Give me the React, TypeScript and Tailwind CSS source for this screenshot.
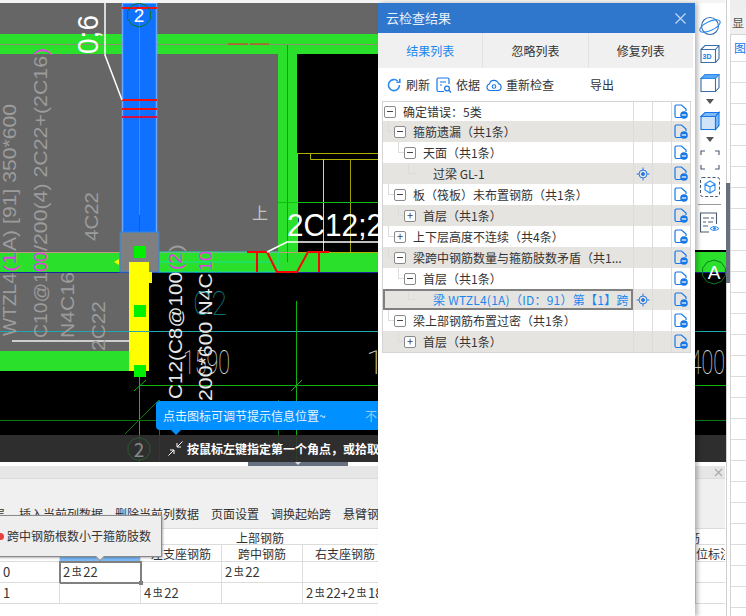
import React from 'react';

const GREEN = '#2be02b';
const MAGENTA = '#e040e0';

interface TreeRow {
  level: number;
  box?: '-' | '+';
  text: string;
  locate?: boolean;
  selected?: boolean;
}

const treeRows: TreeRow[] = [
  { level: 0, box: '-', text: '确定错误：5类' },
  { level: 1, box: '-', text: '箍筋遗漏（共1条）' },
  { level: 2, box: '-', text: '天面（共1条）' },
  { level: 3, text: '过梁 GL-1', locate: true },
  { level: 1, box: '-', text: '板（筏板）未布置钢筋（共1条）' },
  { level: 2, box: '+', text: '首层（共1条）' },
  { level: 1, box: '+', text: '上下层高度不连续（共4条）' },
  { level: 1, box: '-', text: '梁跨中钢筋数量与箍筋肢数矛盾（共1...' },
  { level: 2, box: '-', text: '首层（共1条）' },
  { level: 3, text: '梁 WTZL4(1A)（ID：91）第【1】跨', locate: true, selected: true },
  { level: 1, box: '-', text: '梁上部钢筋布置过密（共1条）' },
  { level: 2, box: '+', text: '首层（共1条）' },
];

function RotText({ x, y, len, size, fill, children }: { x: number; y: number; len: number; size: number; fill: string; children: string }) {
  return (
    <text
      transform={`translate(${x} ${y}) rotate(-90)`}
      fontSize={size}
      fill={fill}
      textLength={len}
      lengthAdjust="spacingAndGlyphs"
      fontFamily="'Liberation Sans', sans-serif"
    >
      {children}
    </text>
  );
}

function Octagon({ cx, cy, r, stroke }: { cx: number; cy: number; r: number; stroke: string }) {
  const pts = [];
  for (let i = 0; i < 10; i++) {
    const a = (Math.PI * 2 * i) / 10 + Math.PI / 10;
    pts.push(`${cx + r * Math.cos(a)},${cy + r * Math.sin(a)}`);
  }
  return <polygon points={pts.join(' ')} fill="none" stroke={stroke} strokeWidth="1" />;
}

function CadDrawing() {
  const grey = '#9c9c9c';
  const thin = "Roboto, 'Liberation Sans', sans-serif";
  return (
    <svg viewBox="0 3 726 459" width="726" height="459" className="block">
      <rect x="0" y="3" width="726" height="459" fill="#000" />
      {/* grey slabs */}
      <rect x="0" y="3" width="378" height="31" fill="#666" />
      <rect x="0" y="54" width="278" height="198" fill="#666" />
      <rect x="0" y="272" width="129" height="79" fill="#666" />
      {/* green beams */}
      <rect x="0" y="34" width="378" height="20" fill={GREEN} />
      <rect x="278" y="54" width="19" height="198" fill={GREEN} />
      <rect x="0" y="252" width="378" height="20" fill={GREEN} />
      <rect x="695" y="252" width="31" height="20" fill={GREEN} />
      <rect x="0" y="351" width="129" height="20" fill={GREEN} />
      <line x1="287.5" y1="44" x2="287.5" y2="262" stroke="#6a6a30" />
      <line x1="0" y1="44.5" x2="378" y2="44.5" stroke="#8d8d70" />
      <line x1="228" y1="44" x2="248" y2="44" stroke="#e03010" />
      <line x1="250" y1="44" x2="269" y2="44" stroke="#e03010" />
      <line x1="0" y1="252.5" x2="378" y2="252.5" stroke="#c09a80" />
      <line x1="0" y1="272.5" x2="378" y2="272.5" stroke="#1428a0" />
      <line x1="695" y1="272.5" x2="726" y2="272.5" stroke="#1428a0" />

      {/* blue column */}
      <rect x="122" y="3" width="35" height="232" fill="#1070ff" />
      <rect x="122.5" y="3" width="34" height="232" fill="none" stroke="#6aa8ff" strokeWidth="1.5" />
      <line x1="139.5" y1="3" x2="139.5" y2="232" stroke="#8a7f7f" />
      <line x1="122" y1="8" x2="157" y2="8" stroke="#f01010" strokeWidth="2" />
      <line x1="122" y1="100" x2="157" y2="100" stroke="#f01010" strokeWidth="2" />
      <line x1="122" y1="109" x2="157" y2="109" stroke="#f01010" strokeWidth="2" />
      <line x1="122" y1="117" x2="157" y2="117" stroke="#d81040" strokeWidth="2" />
      <line x1="139.5" y1="215" x2="139.5" y2="232" stroke="#f01010" />
      <Octagon cx={139} cy={15} r={12} stroke="#0a7a20" />
      <text x="139" y="22" textAnchor="middle" fontSize="19" fill="#fff" fontFamily="'Liberation Sans', sans-serif">2</text>

      {/* leader */}
      <polyline points="105,3 105,55 122,100" fill="none" stroke="#fff" strokeWidth="1.5" />

      {/* joint + yellow stub */}
      <rect x="159" y="252" width="119" height="20" fill="none" stroke="#10e0a0" />
      <line x1="159" y1="262" x2="278" y2="262" stroke="#10e0a0" />
      <rect x="120" y="232" width="39" height="40" fill="#7f7f7f" stroke="#2f86e6" />
      <rect x="134" y="246" width="12" height="12" fill="#00f000" />
      <polygon points="114,262 119,259 119,265" fill="#f8f800" />
      <rect x="149" y="272" width="3" height="11" fill="#f8f800" />
      <rect x="129" y="262" width="20" height="109" fill="#ffff00" />
      <rect x="134" y="305" width="12" height="12" fill="#00f000" />
      <rect x="134" y="365" width="12" height="12" fill="#00f000" />

      {/* stairs */}
      <rect x="297.5" y="153.5" width="82" height="99" fill="none" stroke="#b0b000" />
      <polyline points="310.5,153 310.5,159.5 378,159.5" fill="none" stroke="#b0b000" />
      <line x1="323.5" y1="159" x2="323.5" y2="252" stroke="#e6e600" />
      <line x1="350.5" y1="159" x2="350.5" y2="252" stroke="#a0a000" />
      <line x1="278" y1="202.5" x2="378" y2="202.5" stroke="#10c010" />

      {/* red break symbol */}
      <polyline points="247,252 267,252 277,272 297,272 308,252 329,252" fill="none" stroke="#f00" strokeWidth="2" />
      <line x1="257" y1="252" x2="257" y2="272" stroke="#f00" strokeWidth="2" />
      <line x1="319" y1="252" x2="319" y2="272" stroke="#f00" strokeWidth="2" />

      {/* grid lines */}
      <line x1="0" y1="331.5" x2="726" y2="331.5" stroke="#20a8b0" />
      <line x1="12" y1="341" x2="129" y2="341" stroke="#f0f0f0" strokeWidth="1.5" />
      <line x1="139.5" y1="377" x2="139.5" y2="462" stroke="#10c010" />
      <line x1="139" y1="385.5" x2="726" y2="385.5" stroke="#10b010" />
      <line x1="0" y1="420.5" x2="726" y2="420.5" stroke="#0a7a10" />
      <line x1="296.5" y1="301" x2="296.5" y2="462" stroke="#10b010" />
      <line x1="159.5" y1="400" x2="159.5" y2="462" stroke="#0a7a10" />
      <line x1="278.5" y1="400" x2="278.5" y2="462" stroke="#0a7a10" />
      <line x1="134" y1="391" x2="146" y2="380" stroke="#10b010" />
      <line x1="291" y1="391" x2="302" y2="380" stroke="#10b010" />
      <line x1="125" y1="434" x2="159" y2="400" stroke="#0a7a10" />

      {/* rotated annotation text: split where the colour changes on the green band */}
      <RotText x={98} y={54} len={39} size={30} fill="#fff">0;6</RotText>

      <RotText x={16} y={336} len={63} size={19} fill={grey}>WTZL4</RotText>
      <RotText x={16} y={272} len={20} size={19} fill={MAGENTA}>(1</RotText>
      <RotText x={16} y={251} len={147} size={19} fill={grey}>A) [91] 350*600</RotText>

      <RotText x={47} y={338} len={66} size={19} fill={grey}>C10@1</RotText>
      <RotText x={47} y={272} len={20} size={19} fill={MAGENTA}>00</RotText>
      <RotText x={47} y={251} len={195} size={19} fill={grey}>/200(4) 2C22+(2C16</RotText>
      <RotText x={47} y={55} len={7} size={19} fill={MAGENTA}>)</RotText>

      <RotText x={74} y={338} len={66} size={19} fill={grey}>N4C16</RotText>
      <RotText x={98} y={241} len={49} size={19} fill={grey}>4C22</RotText>
      <RotText x={105} y={351} len={50} size={19} fill={grey}>2C22</RotText>

      <RotText x={182} y={399} len={127} size={19} fill="#e8e8e8">C12(C8@100</RotText>
      <RotText x={182} y={270} len={17} size={19} fill={MAGENTA}>(2</RotText>
      <RotText x={182} y={252} len={8} size={19} fill={grey}>)</RotText>

      <RotText x={212} y={401} len={128} size={19} fill="#e8e8e8">200*600 N4C</RotText>
      <RotText x={212} y={271} len={20} size={19} fill={MAGENTA}>10</RotText>

      <text x="193" y="315" fontSize="34" fontWeight="100" fill="#10808a" fontFamily={thin} textLength="34" lengthAdjust="spacingAndGlyphs">C2</text>
      <text x="183" y="374" fontSize="33" fontWeight="100" fill="#e0e0e0" textLength="47" lengthAdjust="spacingAndGlyphs" fontFamily={thin}>1590</text>
      <text x="366" y="374" fontSize="33" fontWeight="100" fill="#e0e0e0" fontFamily={thin}>1</text>
      <text x="678" y="374" fontSize="33" fontWeight="100" fill="#e0e0e0" textLength="47" lengthAdjust="spacingAndGlyphs" fontFamily={thin}>2400</text>
      <text x="252" y="219" fontSize="16" fill="#c4c4c4" fontFamily="'Noto Sans CJK SC', sans-serif">上</text>
      <text x="287" y="236" fontSize="31" fill="#fff" textLength="96" lengthAdjust="spacingAndGlyphs" fontFamily="'Liberation Sans', sans-serif">2C12;2</text>
      <polyline points="267,252 287,242 378,242" fill="none" stroke="#fff" strokeWidth="1.5" />

      <Octagon cx={714} cy={272} r={12} stroke="#0a7a20" />
      <text x="714" y="279" textAnchor="middle" fontSize="19" fill="#fff" fontFamily="'Liberation Sans', sans-serif">A</text>
    </svg>
  );
}

function RowDocIcon() {
  return (
    <svg width="14" height="15" viewBox="0 0 14 15" fill="none">
      <path d="M9 13.5H2.5a1.5 1.5 0 0 1-1.5-1.5V2.5A1.5 1.5 0 0 1 2.5 1h5l4.5 4v2" stroke="#1677e6" strokeWidth="1.2" />
      <circle cx="10" cy="11" r="3.8" fill="#1677e6" />
      <rect x="7.8" y="10.4" width="4.4" height="1.2" fill="#fff" />
    </svg>
  );
}

function LocateIcon() {
  return (
    <svg width="14" height="14" viewBox="0 0 14 14" fill="none" stroke="#2a7be0" strokeWidth="1">
      <circle cx="7" cy="7" r="4" />
      <circle cx="7" cy="7" r="1.5" fill="#2a7be0" />
      <path d="M7 0.5v2.5M7 11v2.5M0.5 7h2.5M11 7h2.5" />
    </svg>
  );
}

function Tree() {
  return (
    <div className="mx-1 border border-[#d4d4d4]">
      {treeRows.map((row, i) => {
        const odd = i % 2 === 1;
        return (
          <div key={i} className={`relative flex ${i === 0 ? 'h-[19px]' : 'h-[21px]'} ${odd ? 'bg-[#e6e4e1]' : 'bg-white'}`}>
            {row.level > 0 && <div className="absolute top-0 h-[11px] w-[8px] border-b border-l border-[#dcdcdc]" style={{ left: 5 + (row.level - 1) * 10 }} />}
            <div
              className={`flex min-w-0 flex-1 items-center overflow-hidden whitespace-nowrap ${row.selected ? 'relative border-2 border-[#808080]' : ''}`}
              style={{ paddingLeft: row.selected ? 48 : 1 + row.level * 10 }}
            >
              {row.box && (
                <span className="relative z-10 mr-[7px] flex h-[12px] w-[12px] shrink-0 items-center justify-center rounded-[2px] border border-[#8a8a8a] bg-white text-[11px] leading-none text-[#444]">
                  {row.box === '-' ? <span className="h-px w-[6px] bg-[#444]" /> : '+'}
                </span>
              )}
              {!row.box && <span className="w-[19px] shrink-0" style={{ display: row.selected ? 'none' : undefined }} />}
              <span className={`text-[12px] ${row.selected ? 'tracking-[0.25px] text-[#1b87ee]' : 'text-[#333]'}`}>{row.text}</span>
            </div>
            <div className="flex w-[19px] shrink-0 items-center justify-center border-l border-[#dcdcdc]">
              {row.locate && <LocateIcon />}
            </div>
            <div className="w-[19px] shrink-0 border-l border-[#dcdcdc]" />
            <div className="flex w-[19px] shrink-0 items-center justify-center border-l border-[#dcdcdc]">
              <RowDocIcon />
            </div>
          </div>
        );
      })}
    </div>
  );
}

function ResultPanel() {
  return (
    <div className="absolute left-[378px] top-[3px] bottom-0 z-20 w-[317px] bg-white shadow-[3px_0_4px_rgba(0,0,0,0.25)]">
      <div className="flex h-[30px] items-center justify-between bg-[#2f77cc] pl-2 pr-[9px] text-[13px] text-[#e8f0fa]">
        <span>云检查结果</span>
        <svg width="11" height="11" viewBox="0 0 11 11" stroke="#c6d8ef" strokeWidth="1.2">
          <path d="M0.5 0.5l10 10M10.5 0.5l-10 10" />
        </svg>
      </div>
      <div className="mr-[2px] flex h-[35px] bg-[#f0f0f0] text-[12px] text-[#333]">
        <div className="flex flex-1 items-center justify-center border-r border-[#e2e2e2] text-[#1b87ee]">结果列表</div>
        <div className="flex flex-1 items-center justify-center border-r border-[#e2e2e2]">忽略列表</div>
        <div className="flex flex-1 items-center justify-center">修复列表</div>
      </div>
      <div className="flex h-[33px] items-center pl-[9px] text-[12px] text-[#333]">
        <svg width="14" height="14" viewBox="0 0 14 14" fill="none" stroke="#2a8cf0" strokeWidth="1.6">
          <path d="M12.5 7a5.5 5.5 0 1 1-1.8-4" />
          <path d="M12.8 0.8v3.4H9.4" />
        </svg>
        <span className="ml-[5px]">刷新</span>
        <svg className="ml-[6px]" width="16" height="16" viewBox="0 0 16 16" fill="none" stroke="#1677e6" strokeWidth="1.2">
          <path d="M8 14.5H2.5A1.5 1.5 0 0 1 1 13V2.5A1.5 1.5 0 0 1 2.5 1h9A1.5 1.5 0 0 1 13 2.5V7" />
          <path d="M4 5h6M4 8h2" />
          <circle cx="11" cy="11.5" r="2.4" />
          <path d="M13 13.5l2 2" />
        </svg>
        <span className="ml-[4px]">依据</span>
        <svg className="ml-[6px]" width="16" height="14" viewBox="0 0 16 14" fill="none" stroke="#1677e6" strokeWidth="1.1">
          <path d="M4 12.5a3.3 3.3 0 0 1-.5-6.5 4.6 4.6 0 0 1 8.9-.4 3.5 3.5 0 0 1-.4 6.9z" />
          <circle cx="8" cy="8.5" r="1.8" />
        </svg>
        <span className="ml-[4px]">重新检查</span>
        <span className="ml-[36px]">导出</span>
      </div>
      <Tree />
    </div>
  );
}

function SideToolbar() {
  const s = '#3d6ea8';
  return (
    <div className="absolute left-[695px] top-[3px] z-10 flex h-[247px] w-[31px] flex-col items-center bg-white pr-[2px] pt-[12px]">
      <svg width="22" height="22" viewBox="0 0 22 22" fill="none" stroke={s} strokeWidth="1.1">
        <circle cx="11" cy="11" r="8.5" />
        <ellipse cx="11" cy="11" rx="11" ry="4.5" transform="rotate(-25 11 11)" stroke="#2a8cf0" />
      </svg>
      <svg className="mt-[7px]" width="20" height="20" viewBox="0 0 20 20" fill="none" stroke={s} strokeWidth="1.1">
        <path d="M1 5.5L5 1.5h14v13l-3.5 4H1zM1 5.5h14.5v13M15.5 5.5L19 1.5" />
        <text x="2.5" y="15" fontSize="7" fontWeight="700" fill="#1677e6" stroke="none" fontFamily="'Liberation Sans', sans-serif">3D</text>
      </svg>
      <svg className="mt-[9px]" width="20" height="20" viewBox="0 0 20 20" fill="none" stroke={s} strokeWidth="1.1">
        <path d="M1 5.5L5 1.5h14L15.5 5.5H1z" fill="#5aa8f5" stroke="#2a8cf0" />
        <path d="M1 5.5v13h14.5v-13M15.5 18.5L19 14.5v-13" />
      </svg>
      <svg className="mt-[6px]" width="8" height="5" viewBox="0 0 8 5"><path d="M0 0h8L4 5z" fill="#555" /></svg>
      <svg className="mt-[7px]" width="20" height="20" viewBox="0 0 20 20" fill="none" stroke="#1677e6" strokeWidth="1.1">
        <path d="M1 5.5L5 1.5h14l-3.5 4H1z" fill="#7db9f5" />
        <path d="M1 5.5h14.5v13H1z" fill="#cfe3f9" />
        <path d="M15.5 5.5L19 1.5v13l-3.5 4z" fill="#7db9f5" />
      </svg>
      <svg className="mt-[6px]" width="8" height="5" viewBox="0 0 8 5"><path d="M0 0h8L4 5z" fill="#555" /></svg>
      <svg className="mt-[8px]" width="20" height="20" viewBox="0 0 20 20" fill="none" stroke="#4a5a70" strokeWidth="1.1">
        <path d="M1 5V1h4M15 1h4v4M19 15v4h-4M5 19H1v-4" />
      </svg>
      <svg className="mt-[7px]" width="20" height="20" viewBox="0 0 20 20" fill="none">
        <rect x="0.5" y="0.5" width="19" height="19" rx="2" stroke="#4a5a70" strokeDasharray="3 2" />
        <path d="M10 4l5 3v6l-5 3-5-3V7zM5 7l5 3 5-3M10 10v6" stroke="#2a8cf0" strokeWidth="1.1" />
      </svg>
      <div className="mt-[7px] h-px w-[23px] bg-[#999]" />
      <svg className="mt-[7px]" width="21" height="21" viewBox="0 0 21 21" fill="none">
        <path d="M10 20H1.5V1h16v11" stroke="#4a5a70" strokeWidth="1.1" />
        <path d="M4 6h6M12 6h3M4 10h3M9 10h5M4 14h5" stroke="#4a5a70" />
        <path d="M11 16.5q4-4 9 0q-5 4-9 0z" stroke="#2a8cf0" />
        <circle cx="15.5" cy="16.5" r="1.4" fill="#2a8cf0" />
      </svg>
    </div>
  );
}

function Rebar() {
  return <span className="relative -top-[2px] mx-[1.5px] text-[10px]">虫</span>;
}

function BottomPanel() {
  const cell = 'border-r border-b border-[#dcdcdc] h-[21px] flex items-center pl-[3px] text-[13px] text-[#333]';
  const head = 'border-b border-[#dcdcdc] text-[12px] text-[#333]';
  return (
    <div className="relative h-[154px] w-[725px] overflow-hidden bg-white">
      <div className="mt-[4px] flex h-[12px] items-center justify-end bg-[#e6e6e6] pr-[2px]">
        <svg width="9" height="9" viewBox="0 0 9 9" stroke="#aaa" strokeWidth="1.2"><path d="M1 1l7 7M8 1l-7 7" /></svg>
      </div>
      <div className="h-[50px] border-t border-[#dcdcdc] bg-[#f0f0f0]">
        <div className="flex h-[49px] items-end gap-[12px] whitespace-nowrap pb-[5px] text-[12px] text-[#333]">
          <span className="-ml-[7px] mr-[2px]">层</span>
          <span>插入当前列数据</span>
          <span>删除当前列数据</span>
          <span>页面设置</span>
          <span>调换起始跨</span>
          <span>悬臂钢筋代号</span>
        </div>
      </div>
      {/* table */}
      <div className="grid grid-cols-[60px_81px_81px_81px_393px_29px] border-t border-[#dcdcdc] bg-white">
        <div className="col-span-2 h-[16px] border-r border-b border-[#dcdcdc]" />
        <div className={`col-span-3 flex h-[16px] items-center pl-[95px] pt-[2px] ${head}`}>上部钢筋</div>
        <div className={`flex h-[16px] items-center overflow-hidden pt-[2px] ${head}`}><span className="-ml-[8px]">筋</span></div>

        <div className="h-[17px] border-r border-b border-[#dcdcdc]" />
        <div className="h-[17px] border-r border-b border-[#dcdcdc] bg-[#7ab8f5]" />
        <div className={`flex h-[17px] items-center justify-center border-r pt-[1px] ${head}`}>左支座钢筋</div>
        <div className={`flex h-[17px] items-center justify-center border-r pt-[1px] ${head}`}>跨中钢筋</div>
        <div className={`flex h-[17px] items-center border-r pl-[12px] pt-[1px] ${head}`}>右支座钢筋</div>
        <div className={`flex h-[17px] items-center overflow-hidden whitespace-nowrap pt-[1px] ${head}`}>位标注</div>

        <div className={cell}>0</div>
        <div className={`${cell} outline-2 -outline-offset-1 outline-[#808080]`}>2<Rebar />22</div>
        <div className={cell} />
        <div className={cell}>2<Rebar />22</div>
        <div className={cell} />
        <div className="h-[21px] border-b border-[#dcdcdc]" />

        <div className={cell}>1</div>
        <div className={cell} />
        <div className={cell}>4<Rebar />22</div>
        <div className={cell} />
        <div className={cell}>2<Rebar />22+2<Rebar />18</div>
        <div className="h-[21px] border-b border-[#dcdcdc]" />
      </div>
      {/* error tooltip */}
      <div className="absolute -left-[10px] top-[53px] flex h-[42px] w-[172px] items-center border border-[#8a8a8a] bg-[#eeeeee] pl-[6px] text-[12px] text-[#333] shadow-[1px_1px_2px_rgba(0,0,0,0.3)]">
        <span className="mr-[3px] h-[7px] w-[7px] rounded-full bg-[#e84040]" />
        跨中钢筋根数小于箍筋肢数
      </div>
      <div className="absolute left-[97px] top-[92px] h-[6px] w-[6px] rotate-45 border-r border-b border-[#8a8a8a] bg-[#eeeeee]" />
      <div className="absolute left-[139px] top-[119px] h-[4px] w-[4px] bg-[#808080]" />
    </div>
  );
}

function RightStrip() {
  return (
    <div className="flex w-[21px] shrink-0 bg-white">
      <div className="h-full w-[5px] bg-white" />
      <div className="flex-1 border-l border-[#cfcfcf] pl-[3px]">
        <div className="h-[11px] bg-[#eeeeee]" />
        <div className="flex h-[23px] items-center overflow-hidden bg-[#f0f0f0] pl-[2px] text-[12px] text-[#555]">显</div>
        <div className="flex h-[27px] items-center overflow-hidden border-l border-t border-[#d4d4d4] pl-[3px] text-[12px] text-[#1677e6]">图</div>
        <div className="h-full border-l border-[#d4d4d4] bg-[linear-gradient(#dcdcdc_1px,transparent_1px)] bg-[length:100%_21px]" />
      </div>
    </div>
  );
}

export default function App() {
  return (
    <div className="relative flex h-[616px] w-[746px] overflow-hidden bg-white [font-family:'Noto_Sans_CJK_SC','Noto_Sans',sans-serif]">
      <div className="flex w-[725px] shrink-0 flex-col">
        <div className="h-[3px] bg-[#f4f4f4]" />
        <div className="relative h-[459px] w-[726px]">
          <CadDrawing />
          {/* status bar */}
          <div className="absolute bottom-0 left-0 right-0 flex h-[27px] items-center bg-[#333]/90 pl-[168px] text-[12px] font-bold text-white">
            <svg width="15" height="15" viewBox="0 0 15 15" fill="none" stroke="#fff" strokeWidth="1">
              <path d="M14.5 0.5L9 6M9 2v4h4M0.5 14.5L6 9M2 9h4v4" />
            </svg>
            <span className="ml-[4px] whitespace-nowrap">按鼠标左键指定第一个角点，或拾取...</span>
          </div>
          <div className="absolute left-[139px] top-[446px] flex h-0 w-0 items-center justify-center text-[19px] text-[#888]">2</div>
          <svg className="absolute left-[127px] top-[434px]" width="24" height="24" viewBox="0 0 24 24">
            <Octagon cx={12} cy={12} r={11.5} stroke="#2a5a30" />
          </svg>
          {/* hint bubble */}
          <div className="absolute left-[156px] top-[398px] flex h-[29px] w-[222px] items-center justify-between rounded-l-[4px] bg-[#0090ff] pl-[7px] pr-[1px] text-[12px] text-[#e8f4ff]">
            <span>点击图标可调节提示信息位置~</span>
            <span className="text-[#8ccbfa]">不</span>
          </div>
          <div className="absolute left-[171px] top-[427px] h-0 w-0 border-x-[5px] border-t-[5px] border-x-transparent border-t-[#0090ff]" />
        </div>
        <BottomPanel />
        <div className="absolute left-[248px] top-[462px] z-10 flex h-[4px] w-[100px] justify-center bg-[#667080]">
          <span className="h-0 w-0 border-x-[3px] border-t-[3px] border-x-transparent border-t-[#ddd]" />
        </div>
      </div>
      <SideToolbar />
      <ResultPanel />
      <div className="absolute left-[726px] top-[183px] z-10 h-[100px] w-[4px] bg-[#667080]" />
      <RightStrip />
    </div>
  );
}
